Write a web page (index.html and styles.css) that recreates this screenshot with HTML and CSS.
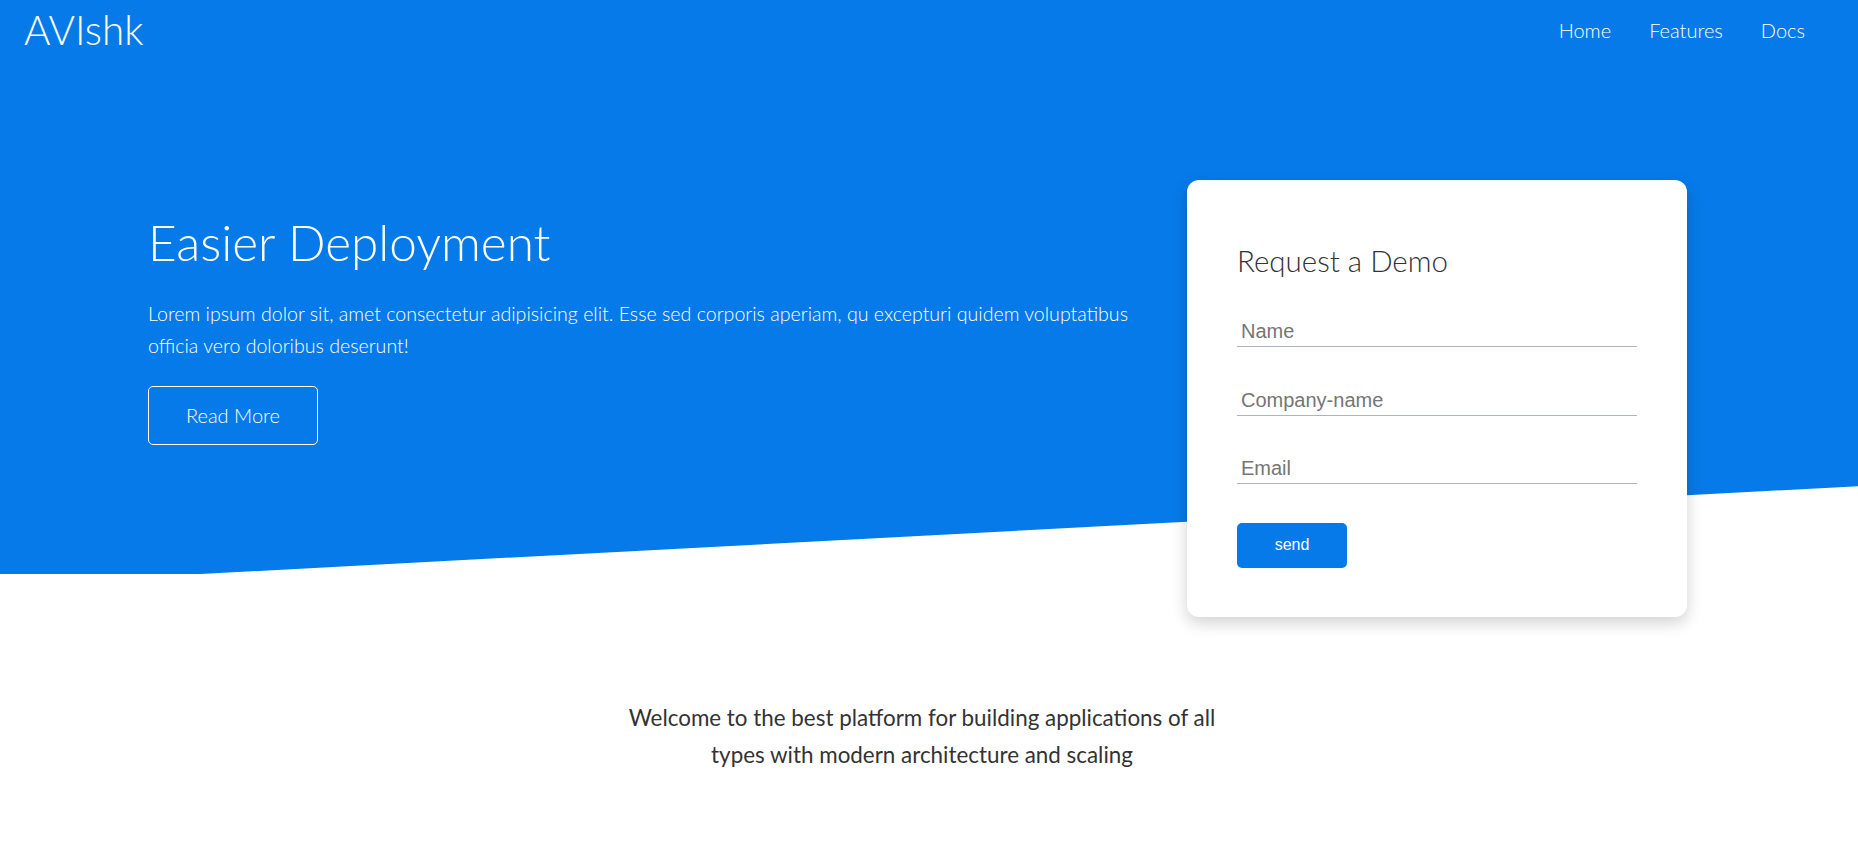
FILE: index.html
```html
<!DOCTYPE html>
<html lang="en">
<head>
<meta charset="utf-8">
<title>AVIshk</title>
<link rel="stylesheet" href="styles.css">
</head>
<body>
<header class="hero">
  <nav class="nav">
    <a class="logo" href="#">AVIshk</a>
    <ul class="nav-links">
      <li><a href="#">Home</a></li>
      <li><a href="#">Features</a></li>
      <li><a href="#">Docs</a></li>
    </ul>
  </nav>
  <div class="hero-body">
    <div class="hero-text">
      <h1 class="hero-title">Easier Deployment</h1>
      <p class="hero-lead">Lorem ipsum dolor sit, amet consectetur adipisicing elit. Esse sed corporis aperiam, qu excepturi quidem voluptatibus officia vero doloribus deserunt!</p>
      <a class="btn-outline" href="#">Read More</a>
    </div>
    <form class="demo-card">
      <h2 class="demo-title">Request a Demo</h2>
      <input class="field" type="text" placeholder="Name">
      <input class="field" type="text" placeholder="Company-name">
      <input class="field" type="email" placeholder="Email">
      <button class="btn-send" type="button">send</button>
    </form>
  </div>
</header>
<section class="intro">
  <p class="intro-text">Welcome to the best platform for building applications of all types with modern architecture and scaling</p>
</section>
</body>
</html>
```

FILE: styles.css
```css
* { box-sizing: border-box; }

html, body {
  margin: 0;
  padding: 0;
  background: #fff;
}

body {
  font-family: Lato, "Open Sans", sans-serif;
  color: #333;
}

.hero {
  position: relative;
  z-index: 0;
}

.hero::before {
  content: "";
  position: absolute;
  top: 0;
  left: 0;
  right: 0;
  height: 574px;
  background: #077ae9;
  clip-path: polygon(0 0, 100% 0, 100% 84.7%, 10.8% 100%, 0 100%);
  z-index: -1;
}

.nav {
  display: flex;
  justify-content: space-between;
  align-items: center;
  height: 60px;
  padding: 0 53px 0 24px;
}

.logo {
  color: #fff;
  text-decoration: none;
  font-size: 40.4px;
  font-weight: 300;
  line-height: 1.2;
}

.nav-links {
  display: flex;
  gap: 38px;
  list-style: none;
  margin: 0;
  padding: 0;
}

.nav-links a {
  color: #fff;
  text-decoration: none;
  font-size: 20px;
  font-weight: 300;
  line-height: 1.2;
}

.hero-body {
  display: flex;
  justify-content: space-between;
  align-items: flex-start;
  padding: 0 171px 0 148px;
  margin-top: 120px;
}

.hero-text {
  width: 1015px;
  padding-top: 33px;
  color: #fff;
}

.hero-title {
  margin: 0;
  font-size: 49.5px;
  font-weight: 300;
  line-height: 1.2;
}

.hero-lead {
  margin: 26px 0 0;
  font-size: 19.6px;
  font-weight: 300;
  line-height: 32px;
}

.btn-outline {
  display: inline-block;
  margin-top: 24px;
  padding: 16px 37px;
  border: 1px solid #fff;
  border-radius: 5px;
  color: #fff;
  text-decoration: none;
  font-size: 20px;
  font-weight: 300;
  line-height: 25px;
}

.demo-card {
  flex: none;
  width: 500px;
  padding: 63px 50px 49px;
  background: #fff;
  border-radius: 12px;
  box-shadow: 0 6px 16px rgba(0, 0, 0, 0.18);
}

.demo-title {
  margin: 0 0 39px;
  font-size: 29.5px;
  font-weight: 300;
  line-height: 1.2;
  color: #333;
}

.field {
  display: block;
  width: 400px;
  margin: 0 0 38.5px;
  padding: 3px 4px 3px;
  border: none;
  border-bottom: 1.5px solid #a9b4c4;
  outline: none;
  background: transparent;
  font-family: "Liberation Sans", Arial, sans-serif;
  font-size: 20px;
  line-height: 23px;
  color: #333;
}

.field::placeholder {
  color: #757575;
}

.btn-send {
  display: block;
  width: 110px;
  height: 45px;
  border: none;
  border-radius: 5px;
  background: #077ae9;
  color: #fff;
  font-family: "Liberation Sans", Arial, sans-serif;
  font-size: 16px;
  cursor: pointer;
}

.intro {
  padding: 82px 14px 40px 0;
}

.intro-text {
  width: 600px;
  margin: 0 auto;
  text-align: center;
  font-size: 22.4px;
  line-height: 37px;
  color: #333;
}
```
